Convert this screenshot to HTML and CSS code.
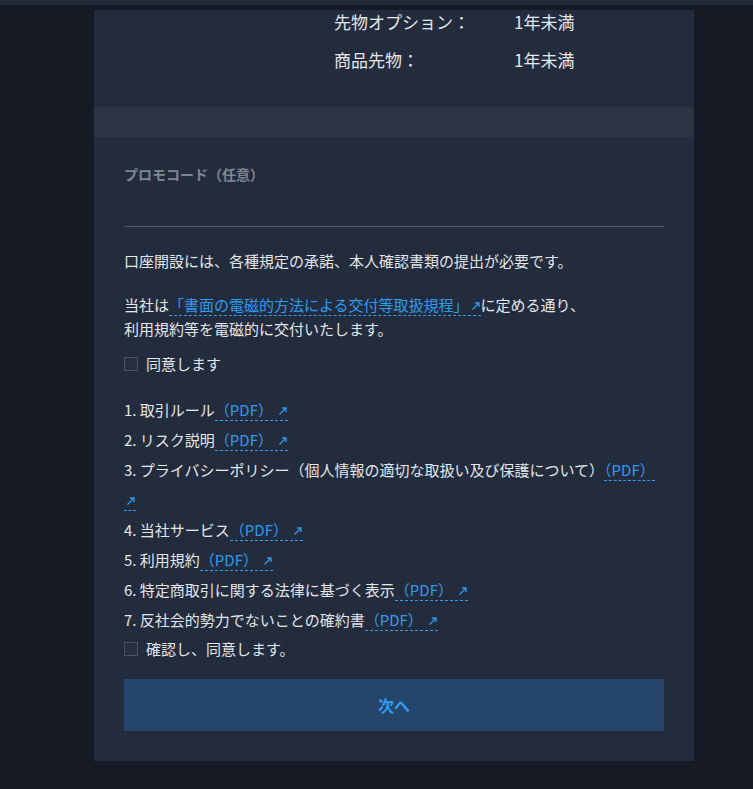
FILE: index.html
```html
<!DOCTYPE html>
<html>
<head>
    <title>口座開設</title>
    <link rel="stylesheet" href="styles.css">
</head>
<body>
    <div class="topbar"></div>
    <div class="card">
        <div class="terms">
            <div class="term-row"><span class="term-label">先物オプション：</span><span>1年未満</span></div>
            <div class="term-row"><span class="term-label">商品先物：</span><span>1年未満</span></div>
        </div>
        <div class="band"></div>
        <form class="form" id="open-form">
            <label class="promo-label" for="promo">プロモコード（任意）</label>
            <input class="promo-input" type="text" id="promo" name="promo">

            <p class="note">口座開設には、各種規定の承諾、本人確認書類の提出が必要です。</p>
            <p class="note note-two">当社は<a class="doc-link" href="#">「書面の電磁的方法による交付等取扱規程」<svg class="ext" viewBox="0 0 10 10"><path d="M1.5 8.5 L8 2 M4 2 H8 V6"/></svg></a>に定める通り、<br>利用規約等を電磁的に交付いたします。</p>

            <label class="check"><span class="box"></span>同意します</label>

            <ol class="docs">
                <li>1. 取引ルール<a class="doc-link" href="#">（PDF） <svg class="ext" viewBox="0 0 10 10"><path d="M1.5 8.5 L8 2 M4 2 H8 V6"/></svg></a></li>
                <li>2. リスク説明<a class="doc-link" href="#">（PDF） <svg class="ext" viewBox="0 0 10 10"><path d="M1.5 8.5 L8 2 M4 2 H8 V6"/></svg></a></li>
                <li>3. プライバシーポリシー（個人情報の適切な取扱い及び保護について）<a class="doc-link" href="#">（PDF） <svg class="ext" viewBox="0 0 10 10"><path d="M1.5 8.5 L8 2 M4 2 H8 V6"/></svg></a></li>
                <li>4. 当社サービス<a class="doc-link" href="#">（PDF） <svg class="ext" viewBox="0 0 10 10"><path d="M1.5 8.5 L8 2 M4 2 H8 V6"/></svg></a></li>
                <li>5. 利用規約<a class="doc-link" href="#">（PDF） <svg class="ext" viewBox="0 0 10 10"><path d="M1.5 8.5 L8 2 M4 2 H8 V6"/></svg></a></li>
                <li>6. 特定商取引に関する法律に基づく表示<a class="doc-link" href="#">（PDF） <svg class="ext" viewBox="0 0 10 10"><path d="M1.5 8.5 L8 2 M4 2 H8 V6"/></svg></a></li>
                <li>7. 反社会的勢力でないことの確約書<a class="doc-link" href="#">（PDF） <svg class="ext" viewBox="0 0 10 10"><path d="M1.5 8.5 L8 2 M4 2 H8 V6"/></svg></a></li>
            </ol>

            <label class="check check-last"><span class="box"></span>確認し、同意します。</label>

            <button class="next" type="submit">次へ</button>
        </form>
    </div>
</body>
</html>
```

FILE: styles.css
```css
body {
    font-family: "Noto Sans CJK JP", "Noto Sans", sans-serif;
    margin: 0;
    padding: 0;
    background-color: #151a25;
    color: #e3e6eb;
}

.topbar {
    height: 5px;
    background-color: #242c3b;
    margin-bottom: 5px;
}

.card {
    width: 600px;
    margin-left: 94px;
    background-color: #232c3d;
}

.terms {
    height: 97px;
    padding-left: 240px;
    box-sizing: border-box;
}

.term-row {
    display: flex;
    font-size: 17px;
    line-height: 24px;
    margin-bottom: 14px;
}

.term-label {
    width: 180px;
}

.band {
    height: 30px;
    background-color: #2c3544;
}

.form {
    padding: 30px;
    margin: 0;
}

.promo-label {
    display: block;
    font-size: 14px;
    line-height: 14px;
    font-weight: bold;
    color: #7f8693;
}

.promo-input {
    display: block;
    width: 100%;
    height: 46px;
    box-sizing: border-box;
    background: transparent;
    border: none;
    border-bottom: 1px solid #4e5668;
    color: #e3e6eb;
    outline: none;
    padding: 0;
}

.note {
    font-size: 15px;
    line-height: 24px;
    margin: 22px 0 0;
}

.note-two {
    margin-top: 20px;
}

.doc-link {
    color: #2f9bf0;
    text-decoration: none;
    border-bottom: 1px dashed #2f9bf0;
}

.ext {
    width: 10px;
    height: 10px;
    fill: none;
    stroke: #2f9bf0;
    stroke-width: 1.3;
    vertical-align: 0;
    margin-left: 2px;
}

.check {
    display: flex;
    align-items: center;
    font-size: 15px;
    line-height: 24px;
    margin-top: 11px;
}

.box {
    width: 14px;
    height: 14px;
    box-sizing: border-box;
    border: 1px solid #4b5262;
    background-color: #263042;
    margin-right: 8px;
}

.docs {
    list-style-type: none;
    margin: 19px 0 0;
    padding: 0;
    font-size: 15px;
    line-height: 30px;
}

.check-last {
    line-height: 28px;
    margin-top: 0;
}

.next {
    display: block;
    width: 100%;
    height: 52px;
    margin-top: 16px;
    border: none;
    background-color: #25466a;
    color: #2f9bf0;
    font-family: inherit;
    font-size: 16px;
    font-weight: bold;
    cursor: pointer;
}
```
